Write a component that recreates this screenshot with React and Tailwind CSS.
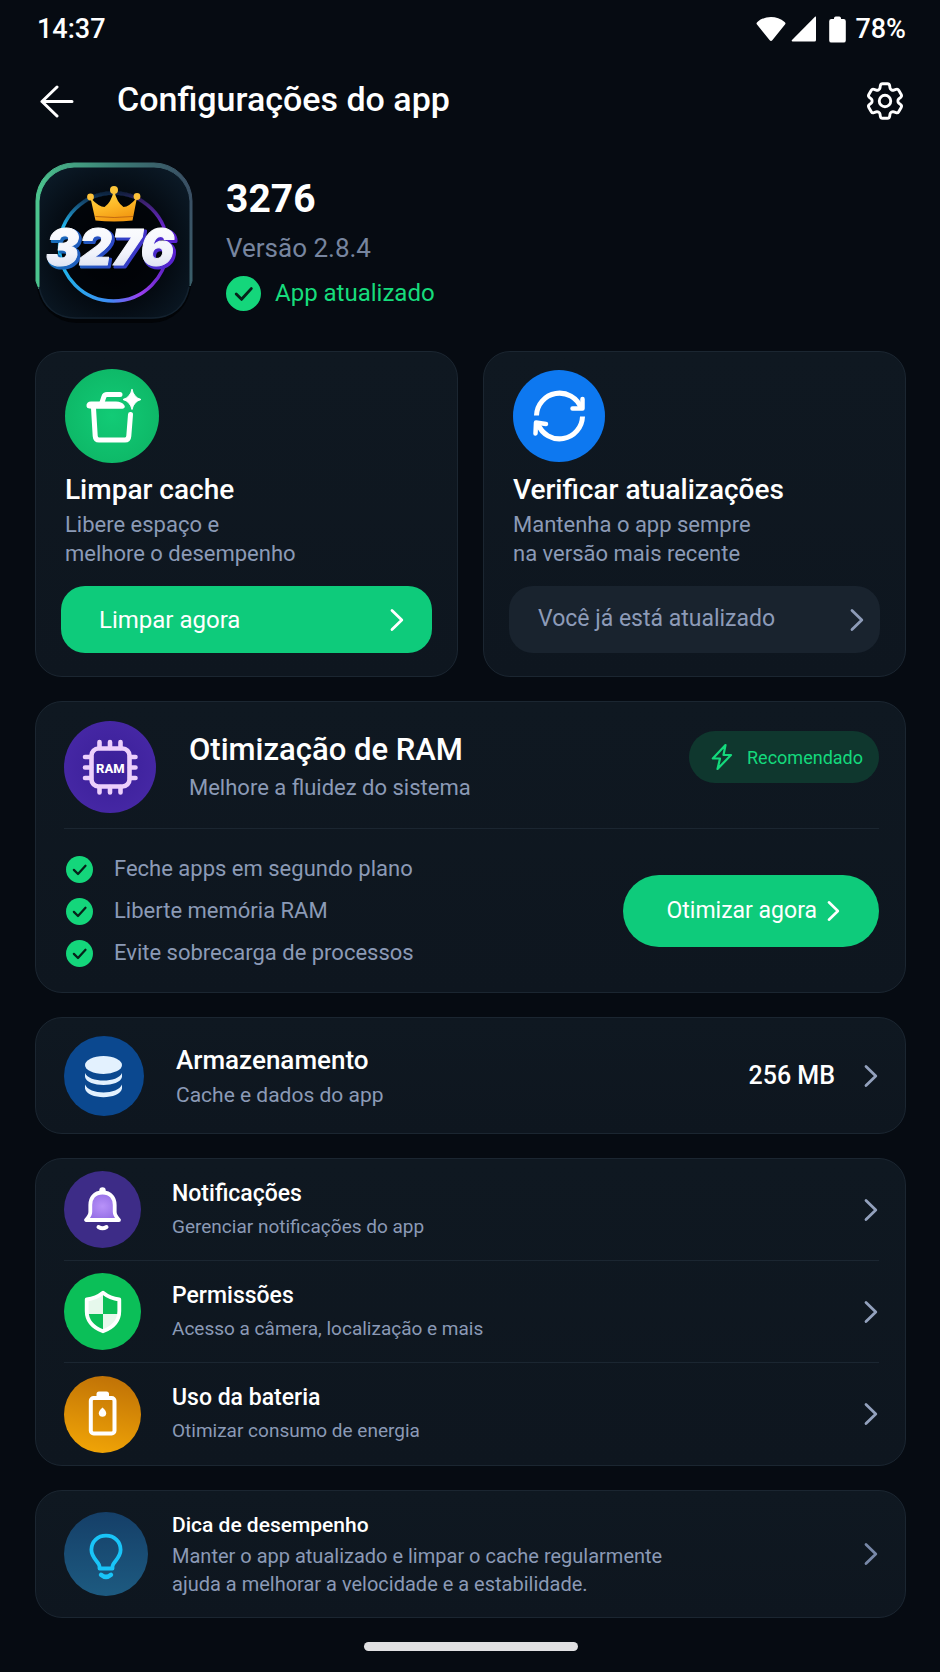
import React from "react";
import { HiOutlineCog6Tooth } from "react-icons/hi2";

const CARD = "rounded-[27px] border border-[#1b2631] bg-linear-to-b from-[#0f1821] to-[#0e161f]";

function Chevron({ className }) {
  return (
    <svg viewBox="0 0 14 24" className={className} fill="none" stroke="currentColor" strokeWidth="2.8" strokeLinecap="round" strokeLinejoin="round" aria-hidden="true">
      <path d="M2 2.5 L11.8 12 L2 21.5" />
    </svg>
  );
}

function Check({ className }) {
  return (
    <svg viewBox="0 0 36 36" className={className} aria-hidden="true">
      <circle cx="18" cy="18" r="18" fill="#14d67b" />
      <path d="M10.5 18.5 L16 24 L26 13" fill="none" stroke="#06231a" strokeWidth="3" strokeLinecap="round" strokeLinejoin="round" />
    </svg>
  );
}

function StatusBar() {
  return (
    <div className="flex h-[58px] items-center justify-between pl-0.5 text-[27px] font-medium text-white">
      <span>14:37</span>
      <div className="flex items-center">
        <svg viewBox="0 0 30 26" className="h-[26px] w-[30px]" fill="#fff" aria-hidden="true">
          <path d="M1 8.6 C0.2 7.6 0.4 6.8 1.4 6 C9 -0.8 21 -0.8 28.6 6 C29.6 6.8 29.8 7.6 29 8.6 L16.3 24.2 C15.5 25.2 14.5 25.2 13.7 24.2 Z" />
        </svg>
        <svg viewBox="0 0 26 26" className="ml-[5px] h-[26px] w-[26px]" fill="#fff" aria-hidden="true">
          <path d="M24 0.8 C24.8 0.2 25 0.6 25 1.4 V24 Q25 25.5 23.5 25.5 H1.6 C0.6 25.5 0.4 24.8 1 24.1 Z" />
        </svg>
        <svg viewBox="0 0 17 27" className="ml-[12px] h-[27px] w-[17px]" fill="#fff" aria-hidden="true">
          <path d="M5 3 V2.2 Q5 0.5 6.8 0.5 H10.2 Q12 0.5 12 2.2 V3 H14.6 Q16.8 3 16.8 5.2 V24.4 Q16.8 26.6 14.6 26.6 H2.4 Q0.2 26.6 0.2 24.4 V5.2 Q0.2 3 2.4 3 Z" />
        </svg>
        <span className="ml-[9px]">78%</span>
      </div>
    </div>
  );
}

function AppLogo() {
  return (
    <svg viewBox="0 0 160 164" className="h-[164px] w-[160px] shrink-0" role="img" aria-label="3276">
      <defs>
        <linearGradient id="edge" x1="0" y1="0.2" x2="1" y2="0">
          <stop offset="0" stopColor="#4cc48e" />
          <stop offset="0.55" stopColor="#3a7a74" />
          <stop offset="1" stopColor="#3a4a62" />
        </linearGradient>
        <radialGradient id="face" cx="0.5" cy="0.55" r="0.7">
          <stop offset="0" stopColor="#010204" />
          <stop offset="0.5" stopColor="#040a11" />
          <stop offset="1" stopColor="#0d1d2b" />
        </radialGradient>
        <linearGradient id="ring" x1="0" y1="0" x2="1" y2="0">
          <stop offset="0" stopColor="#1fb6e8" />
          <stop offset="0.45" stopColor="#3d8ef5" />
          <stop offset="0.75" stopColor="#9a3ff0" />
          <stop offset="1" stopColor="#5a1fc0" />
        </linearGradient>
        <linearGradient id="ringTop" x1="0" y1="0" x2="0" y2="1">
          <stop offset="0" stopColor="#04101e" stopOpacity="0.85" />
          <stop offset="0.3" stopColor="#04101e" stopOpacity="0" />
        </linearGradient>
        <linearGradient id="gold" x1="0" y1="0" x2="0.4" y2="1">
          <stop offset="0" stopColor="#ffdf4d" />
          <stop offset="0.6" stopColor="#fdb827" />
          <stop offset="1" stopColor="#f39a12" />
        </linearGradient>
        <linearGradient id="depth" x1="0" y1="0" x2="1" y2="0">
          <stop offset="0" stopColor="#1671b8" />
          <stop offset="0.5" stopColor="#2a47c4" />
          <stop offset="1" stopColor="#5a1fd0" />
        </linearGradient>
        <linearGradient id="chrome" x1="0" y1="0" x2="0" y2="1">
          <stop offset="0" stopColor="#ffffff" />
          <stop offset="0.6" stopColor="#f1f3fb" />
          <stop offset="1" stopColor="#cfd6ea" />
        </linearGradient>
      </defs>
      <rect x="3" y="9" width="154" height="153" rx="40" fill="#020407" />
      <rect x="4" y="4" width="152" height="154" rx="38" fill="url(#face)" />
      <path d="M2 120 V40 A38 38 0 0 1 40 2 H120 A38 38 0 0 1 158 40 V120 L156 125 V40 A36 36 0 0 0 120 6 H40 A36 36 0 0 0 5 40 V128 Z" fill="url(#edge)" stroke="url(#edge)" strokeWidth="1" />
      <path d="M5 126 C9 146 22 157 42 157 H118 C138 157 151 146 155 126" fill="none" stroke="#13212e" strokeWidth="1.5" />
      <circle cx="79.5" cy="86" r="54" fill="#000205" fillOpacity="0.6" stroke="url(#ring)" strokeWidth="3.4" />
      <circle cx="79.5" cy="86" r="54" fill="none" stroke="url(#ringTop)" strokeWidth="4.5" />
      <path d="M56.5 37 Q65 46 70.5 46 Q77 42 80 29 Q83 42 89.5 46 Q95 46 103 36.5 L98.500 59.5 Q80 61.5 61.5 59.5 Z" fill="url(#gold)" />
      <circle cx="56.5" cy="36" r="3.4" fill="#fdc23a" />
      <circle cx="80" cy="29" r="4" fill="#fdc53a" />
      <circle cx="103" cy="35.5" r="3.4" fill="#fdc23a" />
      <path d="M61.5 55.5 Q80 57.5 99 55.5" fill="none" stroke="#c26a10" strokeWidth="1" />
      <g fontFamily="Inter, sans-serif" fontWeight="900" fontStyle="italic" fontSize="50" textAnchor="middle" strokeLinejoin="round">
        <text x="78" y="106" fill="url(#depth)" stroke="url(#depth)" strokeWidth="3">3276</text>
        <text x="76" y="104" fill="url(#chrome)" stroke="url(#chrome)" strokeWidth="1">3276</text>
      </g>
    </svg>
  );
}

function TrashIcon() {
  return (
    <svg viewBox="0 0 94 94" className="size-[94px]" fill="none" stroke="#fff" strokeLinecap="round" strokeLinejoin="round" aria-hidden="true">
      <defs>
        <radialGradient id="mint">
          <stop offset="0" stopColor="#12cb76" />
          <stop offset="1" stopColor="#0eb968" />
        </radialGradient>
      </defs>
      <circle cx="47" cy="47" r="47" fill="url(#mint)" stroke="none" />
      <path d="M37 33.5 L38.8 28 Q39.6 25.5 42 25.5 H55" strokeWidth="5" />
      <path d="M23.8 37 Q23.5 34.8 26 34.8 H51 Q55.5 34.8 57.5 37.5 H26.5 Q24 37.5 23.8 37" strokeWidth="4.6" />
      <path d="M28.5 39 L30.2 67 Q30.5 71 34 71 H60 Q63.5 71 63.8 67 L65.5 45.5" strokeWidth="5" />
      <path d="M67 20.5 Q68.8 28.5 76 30.5 Q68.8 32.5 67 40.5 Q65.2 32.5 58 30.5 Q65.2 28.5 67 20.5 Z" fill="#fff" strokeWidth="1" />
    </svg>
  );
}

function RefreshIcon() {
  return (
    <svg viewBox="0 0 92 92" className="size-[92px]" fill="none" stroke="#fff" strokeWidth="5" strokeLinejoin="round" aria-hidden="true">
      <circle cx="46" cy="46" r="46" fill="#0d78f0" stroke="none" />
      <path d="M23.5 45.5 A23 23 0 0 1 68 38" />
      <path d="M69.5 29 V38.5 H59.5" strokeWidth="4.5" strokeLinecap="round" />
      <path d="M69.5 46.5 A23 23 0 0 1 25 54" />
      <path d="M22.5 63.500 L23 52.5 L33 54" strokeWidth="4.5" strokeLinecap="round" />
    </svg>
  );
}

function RamIcon() {
  return (
    <svg viewBox="0 0 92 92" className="size-[92px] shrink-0" aria-hidden="true">
      <defs>
        <radialGradient id="violet">
          <stop offset="0" stopColor="#3a1f98" />
          <stop offset="1" stopColor="#4527a4" />
        </radialGradient>
      </defs>
      <circle cx="46" cy="46" r="46" fill="url(#violet)" />
      <g fill="none" stroke="#ecd0fb" strokeWidth="4.6">
        <path strokeLinecap="round" d="M35.5 21 V27 M46 21 V27 M56.5 21 V27 M35.5 66 V71.5 M46 66 V71.5 M56.500 66 V71.5 M21 36 H27 M21 46.5 H27 M21 57 H27 M66 36 H71.5 M66 46.5 H71.5 M66 57 H71.5" />
        <rect x="27.5" y="27.5" width="38" height="38" rx="7" />
      </g>
      <text x="46.3" y="51.5" textAnchor="middle" fontFamily="Roboto, sans-serif" fontWeight="800" fontSize="13" fill="#fff">RAM</text>
    </svg>
  );
}

function StorageIcon() {
  return (
    <svg viewBox="0 0 80 80" className="size-[80px] shrink-0" fill="#e3f1fe" aria-hidden="true">
      <circle cx="40" cy="40" r="40" fill="#0b488f" />
      <ellipse cx="39.5" cy="29" rx="18.5" ry="9" />
      <path d="M21 37 C25 47 54 47 58 37 V41 C56 51.5 23 51.5 21 41 Z" />
      <path d="M21 48.5 C25 59 54 59 58 48.5 V52.5 C56 64 23 64 21 52.5 Z" />
    </svg>
  );
}

function BellIcon() {
  return (
    <svg viewBox="0 0 77 77" className="size-[77px] shrink-0" fill="none" stroke="#fff" strokeLinecap="round" strokeLinejoin="round" aria-hidden="true">
      <defs>
        <radialGradient id="lilac">
          <stop offset="0" stopColor="#b892f9" />
          <stop offset="1" stopColor="#9670e6" />
        </radialGradient>
      </defs>
      <circle cx="38.5" cy="38.5" r="38.5" fill="#3d2c87" stroke="none" />
      <circle cx="38.5" cy="19.5" r="3.2" fill="#fff" stroke="none" />
      <path d="M38.5 21.5 C30 21.5 26.3 27.5 26.3 34 V41 Q26.3 44.5 22 49 H55 Q50.7 44.5 50.7 41 V34 C50.7 27.5 47 21.5 38.5 21.5 Z" fill="url(#lilac)" strokeWidth="3.8" />
      <path d="M34.5 56 Q38.5 58.5 42.5 56" strokeWidth="4" />
    </svg>
  );
}

function ShieldIcon() {
  return (
    <svg viewBox="0 0 77 77" className="size-[77px] shrink-0" aria-hidden="true">
      <circle cx="38.5" cy="38.5" r="38.5" fill="#0bbf58" />
      <path d="M39 19.5 V41 H22.5 V26 Q31 25 39 19.5 Z M39 41 H55 Q53 52 39 58 Z" fill="#e6f8ec" />
      <path d="M39 19.8 Q46 25.5 55.3 26.5 V38 C55.3 48.5 49 54.5 39 58.3 C29 54.5 22.7 48.5 22.7 38 V26.5 Q32 25.5 39 19.8 Z" fill="none" stroke="#fff" strokeWidth="3.8" strokeLinejoin="round" />
    </svg>
  );
}

function BatteryIcon() {
  return (
    <svg viewBox="0 0 77 77" className="size-[77px] shrink-0" aria-hidden="true">
      <defs>
        <linearGradient id="amber" x1="0.6" y1="0" x2="0.4" y2="1">
          <stop offset="0" stopColor="#c07206" />
          <stop offset="1" stopColor="#f0a406" />
        </linearGradient>
      </defs>
      <circle cx="38.5" cy="38.5" r="38.5" fill="url(#amber)" />
      <rect x="32.5" y="15.5" width="12.5" height="7" rx="2.5" fill="#fff" />
      <rect x="26.8" y="22" width="23.7" height="35.5" rx="2.8" fill="none" stroke="#fff" strokeWidth="4" />
      <path d="M38.5 31.5 Q42.5 35 42.2 37.5 Q41.8 40.8 38.5 40.8 Q35.2 40.8 34.8 37.5 Q34.5 35 38.5 31.5 Z" fill="#fff" />
    </svg>
  );
}

function BulbIcon() {
  return (
    <svg viewBox="0 0 84 84" className="size-[84px] shrink-0" fill="none" stroke="#19c4f8" strokeWidth="3.8" strokeLinecap="round" strokeLinejoin="round" aria-hidden="true">
      <defs>
        <linearGradient id="ocean" x1="0" y1="0" x2="0" y2="1">
          <stop offset="0" stopColor="#153f68" />
          <stop offset="1" stopColor="#1d5a80" />
        </linearGradient>
      </defs>
      <circle cx="42" cy="42" r="42" fill="url(#ocean)" stroke="none" />
      <path d="M35.5 56.5 V54.5 C35.5 50 27.4 46.5 27.4 37.8 C27.4 29.5 33.8 23.7 42 23.7 C50.2 23.7 56.6 29.5 56.6 37.8 C56.6 46.5 48.5 50 48.5 54.5 V56.5 Z" />
      <path d="M37 62.8 Q42 67 47 62.8" strokeWidth="4.4" />
    </svg>
  );
}

function ActionCard({ icon, title, lines, children }) {
  return (
    <section className={`${CARD} flex flex-col px-[25px] pt-4 pb-[23px]`}>
      <div className="ml-1 flex h-24 items-center">{icon}</div>
      <div className="mt-2 pl-1">
        <h2 className="text-[28px] leading-9 font-medium text-white">{title}</h2>
        <p className="mt-0.5 text-[22px] leading-[29px] text-[#8b9ab6]">
          {lines[0]}
          <br />
          {lines[1]}
        </p>
      </div>
      {children}
    </section>
  );
}

const TIPS = ["Feche apps em segundo plano", "Liberte memória RAM", "Evite sobrecarga de processos"];

const ROWS = [
  { title: "Notificações", text: "Gerenciar notificações do app", icon: <BellIcon /> },
  { title: "Permissões", text: "Acesso a câmera, localização e mais", icon: <ShieldIcon /> },
  { title: "Uso da bateria", text: "Otimizar consumo de energia", icon: <BatteryIcon /> },
];

export default function App() {
  return (
    <div className="min-h-screen bg-[#060b12] pr-[34px] pl-[35px] font-[Roboto,sans-serif]">
      <StatusBar />

      <header className="flex h-[86px] items-center">
        <button type="button" aria-label="Voltar" className="ml-1 flex text-white">
          <svg viewBox="0 0 36 34" className="h-[34px] w-9" fill="none" stroke="currentColor" strokeWidth="3" strokeLinecap="round" strokeLinejoin="round" aria-hidden="true">
            <path d="M18 3 L3 17.5 L18 32 M3 17.5 H33" />
          </svg>
        </button>
        <h1 className="ml-[42px] flex-1 pb-1 text-[34px] leading-10 font-medium text-white">Configurações do app</h1>
        <button type="button" aria-label="Configurações" className="-mr-0.5 flex text-white">
          <HiOutlineCog6Tooth className="size-[46px]" />
        </button>
      </header>

      <section className="-ml-px mt-[17px] flex h-40 items-start gap-8">
        <AppLogo />
        <div className="flex flex-col gap-3 pt-4">
          <h2 className="text-[39px] leading-[44px] font-bold text-white">3276</h2>
          <p className="text-[26px] leading-[31px] text-[#77859f]">Versão 2.8.4</p>
          <p className="flex items-center gap-[14px] text-[24px] leading-[35px] text-[#16dc7c]">
            <Check className="size-[35px]" />
            App atualizado
          </p>
        </div>
      </section>

      <main className="mt-[30px] flex flex-col gap-6">
        <div className="grid grid-cols-2 gap-[25px]">
          <ActionCard icon={<TrashIcon />} title="Limpar cache" lines={["Libere espaço e", "melhore o desempenho"]}>
            <button type="button" className="mt-[18px] flex h-[67px] items-center justify-between rounded-3xl bg-[#0ecb7b] pr-[28px] pl-[38px] text-[24px] text-white">
              Limpar agora
              <Chevron className="h-6 w-[14px]" />
            </button>
          </ActionCard>
          <ActionCard icon={<RefreshIcon />} title="Verificar atualizações" lines={["Mantenha o app sempre", "na versão mais recente"]}>
            <button type="button" className="mt-[18px] flex h-[67px] items-center justify-between rounded-3xl bg-[#19232e] pr-[16px] pl-[29px] text-[23px] text-[#8d9bb8]">
              Você já está atualizado
              <Chevron className="h-6 w-[14px]" />
            </button>
          </ActionCard>
        </div>

        <section className={`${CARD} pr-[26px] pl-[28px]`}>
          <div className="flex items-center border-b border-[#1b2631] pt-[19px] pb-[15px]">
            <RamIcon />
            <div className="ml-[33px] flex-1">
              <h2 className="text-[31px] leading-[38px] font-medium text-white">Otimização de RAM</h2>
              <p className="mt-1 text-[22px] leading-[30px] text-[#8b9ab6]">Melhore a fluidez do sistema</p>
            </div>
            <span className="mt-[10px] flex h-[52px] items-center gap-[14px] self-start rounded-full bg-[#0f372e] pr-4 pl-[22px] text-[18px] text-[#14d97c]">
              <svg viewBox="0 0 22 28" className="h-7 w-[22px]" fill="none" stroke="currentColor" strokeWidth="2.2" strokeLinejoin="round" aria-hidden="true">
                <path d="M14.5 2 L1.8 15.5 H9 L6.5 26 L20 12 H12.5 Z" />
              </svg>
              Recomendado
            </span>
          </div>
          <div className="flex items-center justify-between pt-[19px] pb-[18px]">
            <ul className="pl-[2px] text-[22px] leading-[42px] text-[#8b9ab6]">
              {TIPS.map((tip) => (
                <li key={tip} className="flex items-center gap-[21px]">
                  <Check className="size-[27px]" />
                  {tip}
                </li>
              ))}
            </ul>
            <button type="button" className="flex h-[72px] items-center gap-[10px] rounded-full bg-[#0ecb7b] pr-[39px] pl-[43px] text-[23px] text-white">
              Otimizar agora
              <Chevron className="h-[22px] w-[13px]" />
            </button>
          </div>
        </section>

        <a href="#armazenamento" className={`${CARD} flex h-[117px] items-center pr-[27px] pl-[28px]`}>
          <StorageIcon />
          <span className="ml-8 flex flex-1 flex-col gap-1">
            <span className="text-[26px] leading-[34px] font-medium text-white">Armazenamento</span>
            <span className="text-[21px] leading-7 text-[#8b9ab6]">Cache e dados do app</span>
          </span>
          <span className="mr-[29px] text-[25px] font-medium text-white">256 MB</span>
          <Chevron className="h-6 w-[14px] text-[#93a1bd]" />
        </a>

        <nav className={`${CARD} pr-[26px] pl-[28px]`}>
          {ROWS.map((row) => (
            <a key={row.title} href="#ajustes" className="flex h-[102px] items-center border-b border-[#1b2631] pr-px last:border-b-0">
              {row.icon}
              <span className="ml-[31px] flex flex-1 flex-col gap-[6px]">
                <span className="text-[23px] leading-7 font-medium text-white">{row.title}</span>
                <span className="text-[19px] leading-[26px] text-[#8b9ab6]">{row.text}</span>
              </span>
              <Chevron className="h-6 w-[14px] text-[#93a1bd]" />
            </a>
          ))}
        </nav>

        <a href="#dica" className={`${CARD} flex h-[128px] items-center pr-[27px] pl-[28px]`}>
          <BulbIcon />
          <span className="ml-6 flex flex-1 flex-col gap-[3px]">
            <span className="text-[21px] leading-7 font-medium text-white">Dica de desempenho</span>
            <span className="text-[20px] leading-7 text-[#8b9ab6]">
              Manter o app atualizado e limpar o cache regularmente
              <br />
              ajuda a melhorar a velocidade e a estabilidade.
            </span>
          </span>
          <Chevron className="h-6 w-[14px] text-[#7888a8]" />
        </a>
      </main>

      <div className="flex justify-center pt-6 pb-[21px]">
        <div className="h-[9px] w-[214px] rounded-full bg-[#e0e0e2]" />
      </div>
    </div>
  );
}
